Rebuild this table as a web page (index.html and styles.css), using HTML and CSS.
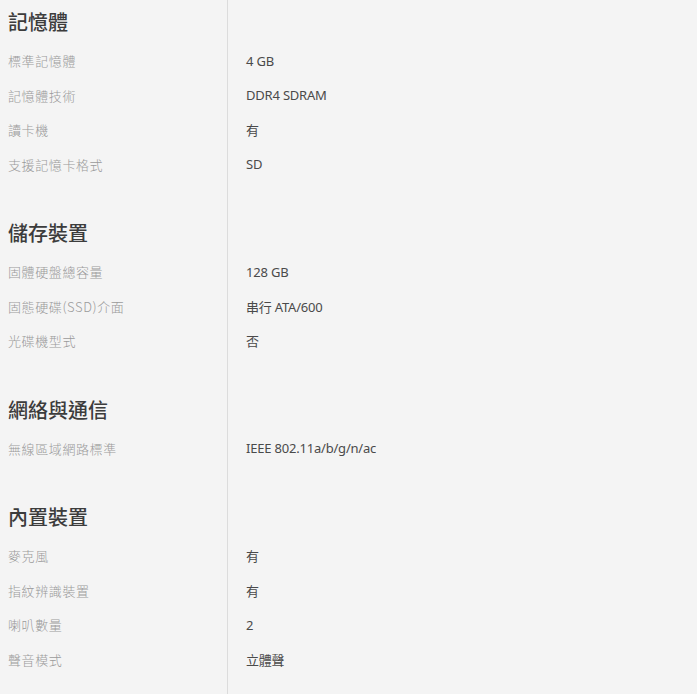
FILE: index.html
```html
<!DOCTYPE html>
<html lang="zh-Hant">
<head>
  <meta charset="UTF-8">
  <meta name="viewport" content="width=device-width, initial-scale=1.0">
  <title>規格</title>
  <link rel="stylesheet" href="styles.css">
</head>
<body>
  <div class="specs">
    <!-- 記憶體 -->
    <section class="spec-group">
      <h2>記憶體</h2>
      <dl>
        <dt>標準記憶體</dt><dd>4 GB</dd>
        <dt>記憶體技術</dt><dd>DDR4 SDRAM</dd>
        <dt>讀卡機</dt><dd>有</dd>
        <dt>支援記憶卡格式</dt><dd>SD</dd>
      </dl>
    </section>
    <!-- 儲存裝置 -->
    <section class="spec-group">
      <h2>儲存裝置</h2>
      <dl>
        <dt>固體硬盤總容量</dt><dd>128 GB</dd>
        <dt>固態硬碟(SSD)介面</dt><dd>串行 ATA/600</dd>
        <dt>光碟機型式</dt><dd>否</dd>
      </dl>
    </section>
    <!-- 網絡與通信 -->
    <section class="spec-group">
      <h2>網絡與通信</h2>
      <dl>
        <dt>無線區域網路標準</dt><dd>IEEE 802.11a/b/g/n/ac</dd>
      </dl>
    </section>
    <!-- 內置裝置 -->
    <section class="spec-group">
      <h2>內置裝置</h2>
      <dl>
        <dt>麥克風</dt><dd>有</dd>
        <dt>指紋辨識裝置</dt><dd>有</dd>
        <dt>喇叭數量</dt><dd>2</dd>
        <dt>聲音模式</dt><dd>立體聲</dd>
      </dl>
    </section>
  </div>
</body>
</html>
```

FILE: styles.css
```css
* {
  margin: 0;
  padding: 0;
  box-sizing: border-box;
}
body {
  font-family: 'Noto Sans', 'Noto Sans CJK TC', sans-serif;
  background: #f4f4f4;
  color: #444;
}
/* columna izquierda con línea divisoria */
.specs {
  min-height: 100vh;
  padding-top: 10px;
  background: linear-gradient(#dcdcdc, #dcdcdc) 227px 0 / 1px 100% no-repeat;
}
.spec-group + .spec-group {
  margin-top: 39.5px;
}
.spec-group h2 {
  font-family: 'Noto Sans CJK TC', sans-serif;
  font-size: 20px;
  font-weight: 500;
  line-height: 24px;
  color: #3c3c3c;
  padding-left: 8px;
  margin-bottom: 9.5px;
}
.spec-group dl {
  display: grid;
  grid-template-columns: 228px 1fr;
  grid-auto-rows: 34.5px;
  align-items: center;
  font-size: 13px;
}
.spec-group dt {
  font-family: 'Noto Sans CJK TC', sans-serif;
  font-weight: 300;
  letter-spacing: 0.6px;
  color: #9a9a9a;
  padding-left: 8px;
}
.spec-group dd {
  color: #4a4a4a;
  letter-spacing: -0.2px;
  padding-left: 18px;
}
```
